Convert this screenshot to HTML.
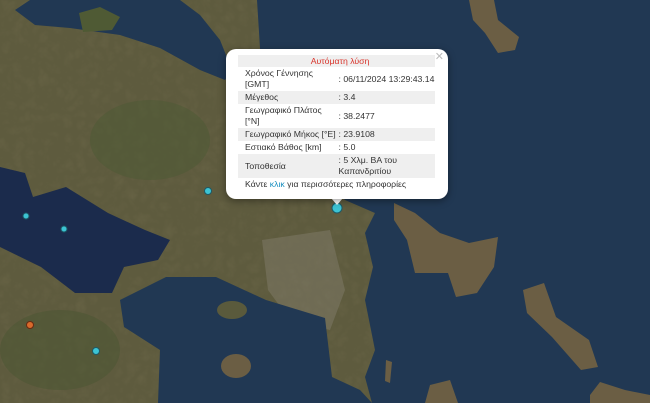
<!DOCTYPE html>
<html><head><meta charset="utf-8"><style>
html,body{margin:0;padding:0;width:650px;height:403px;overflow:hidden;background:#5a573b}
#map{position:absolute;left:0;top:0}
.pop{position:absolute;left:226px;top:49px;width:222px;height:150px;background:#fff;border-radius:10px;box-shadow:0 2px 8px rgba(0,0,0,.4);font-family:"Liberation Sans","DejaVu Sans",sans-serif;font-size:8.7px;color:#333}
.tip{position:absolute;left:331px;top:198px;width:0;height:0;border-left:6px solid transparent;border-right:6px solid transparent;border-top:7px solid #fff}
.x{position:absolute;right:4px;top:1px;color:#bbb;font-size:11px}
table{position:absolute;left:12px;top:6px;width:197px;border-collapse:collapse;table-layout:fixed}
td{padding:0 0 0 7px;line-height:11px;vertical-align:middle;white-space:nowrap}
tr.g{background:#efefef}
td.l{width:84px}
td.v{padding-left:2px}
.h{text-align:center;color:#d9342b;height:12px}
.s{height:13px}.d{height:24px}
.f{position:absolute;left:19px;top:130px;}
.f b{font-weight:normal;color:#1a8fc0}
</style></head><body>
<svg id="map" width="650" height="403" viewBox="0 0 650 403">
<defs><filter id="n"><feTurbulence baseFrequency="0.08" numOctaves="3" seed="4"/><feColorMatrix values="0 0 0 0 0.18  0 0 0 0 0.16  0 0 0 0 0.08  0 0 0 0.45 -0.1"/></filter></defs>
<rect width="650" height="403" fill="#5e5b3e"/>
<rect width="650" height="403" filter="url(#n)"/>
<ellipse cx="150" cy="140" rx="60" ry="40" fill="#4c5a33" opacity=".5"/>
<ellipse cx="60" cy="350" rx="60" ry="40" fill="#4a5532" opacity=".5"/>
<path d="M262 240 L330 230 L345 290 L330 330 L290 320 L268 290Z" fill="#8a8575" opacity=".4"/>
<g fill="#213853">
<path d="M257 0 L650 0 L650 403 L372 403 L365 377 L375 350 L365 300 L373 267 L365 233 L375 213 L345 200 L300 150 L262 80Z"/>
<path d="M15 10 L30 0 L180 0 L200 15 L220 40 L232 70 L225 80 L200 70 L160 48 L120 35 L70 28 L35 25Z"/>
<path d="M120 300 L166 277 L216 277 L266 300 L325 318 L332 377 L360 390 L372 403 L158 403 L160 350 L124 327Z"/>
</g>
<path d="M0 167 L25 173 L33 197 L66 187 L108 213 L145 230 L170 240 L158 260 L124 267 L112 293 L75 293 L41 267 L0 247Z" fill="#1b2b4c"/>
<g fill="#6b5e44">
<path d="M394 203 L415 213 L440 233 L469 243 L498 237 L494 267 L477 293 L456 297 L448 273 L415 273 L407 240 L394 220Z"/>
<path d="M523 290 L544 283 L556 317 L589 340 L598 367 L581 370 L552 337 L527 313Z"/>
<path d="M469 0 L494 0 L498 20 L519 37 L515 50 L498 53 L485 33 L473 20Z"/>
<path d="M425 403 L430 385 L450 380 L458 403Z"/>
<path d="M590 395 L600 382 L625 390 L650 395 L650 403 L590 403Z"/>
<path d="M386 360 L392 362 L390 383 L385 381Z"/>
<path d="M79 13 L100 7 L120 17 L112 30 L83 32Z" fill="#4f5a34"/>
<ellipse cx="236" cy="366" rx="15" ry="12"/>
<ellipse cx="232" cy="310" rx="15" ry="9" fill="#5a5a3c"/>
</g>
<g stroke="#1d5a66" stroke-width="1">
<circle cx="208" cy="191" r="3.5" fill="#3cc4d4"/>
<circle cx="26" cy="216" r="3" fill="#3cc4d4"/>
<circle cx="64" cy="229" r="3" fill="#3cc4d4"/>
<circle cx="96" cy="351" r="3.5" fill="#3cc4d4"/>
<circle cx="30" cy="325" r="3.5" fill="#d86a2c" stroke="#6a2a10"/>
<circle cx="337" cy="208" r="5" fill="#3cc4d4"/>
</g>
</svg>
<div class="tip"></div>
<div class="pop"><span class="x">✕</span>
<table>
<tr class="g"><td colspan="2" class="h">Αυτόματη λύση</td></tr>
<tr><td class="l d">Χρόνος Γέννησης<br>[GMT]</td><td class="v">: 06/11/2024 13:29:43.14</td></tr>
<tr class="g"><td class="l s">Μέγεθος</td><td class="v">: 3.4</td></tr>
<tr><td class="l d">Γεωγραφικό Πλάτος<br>[°N]</td><td class="v">: 38.2477</td></tr>
<tr class="g"><td class="l s">Γεωγραφικό Μήκος [°E]</td><td class="v">: 23.9108</td></tr>
<tr><td class="l s">Εστιακό Βάθος [km]</td><td class="v">: 5.0</td></tr>
<tr class="g"><td class="l d">Τοποθεσία</td><td class="v">: 5 Χλμ. ΒΑ του<br>Καπανδριτίου</td></tr>
</table>
<div class="f">Κάντε <b>κλικ</b> για περισσότερες πληροφορίες</div>
</div>
</body></html>
